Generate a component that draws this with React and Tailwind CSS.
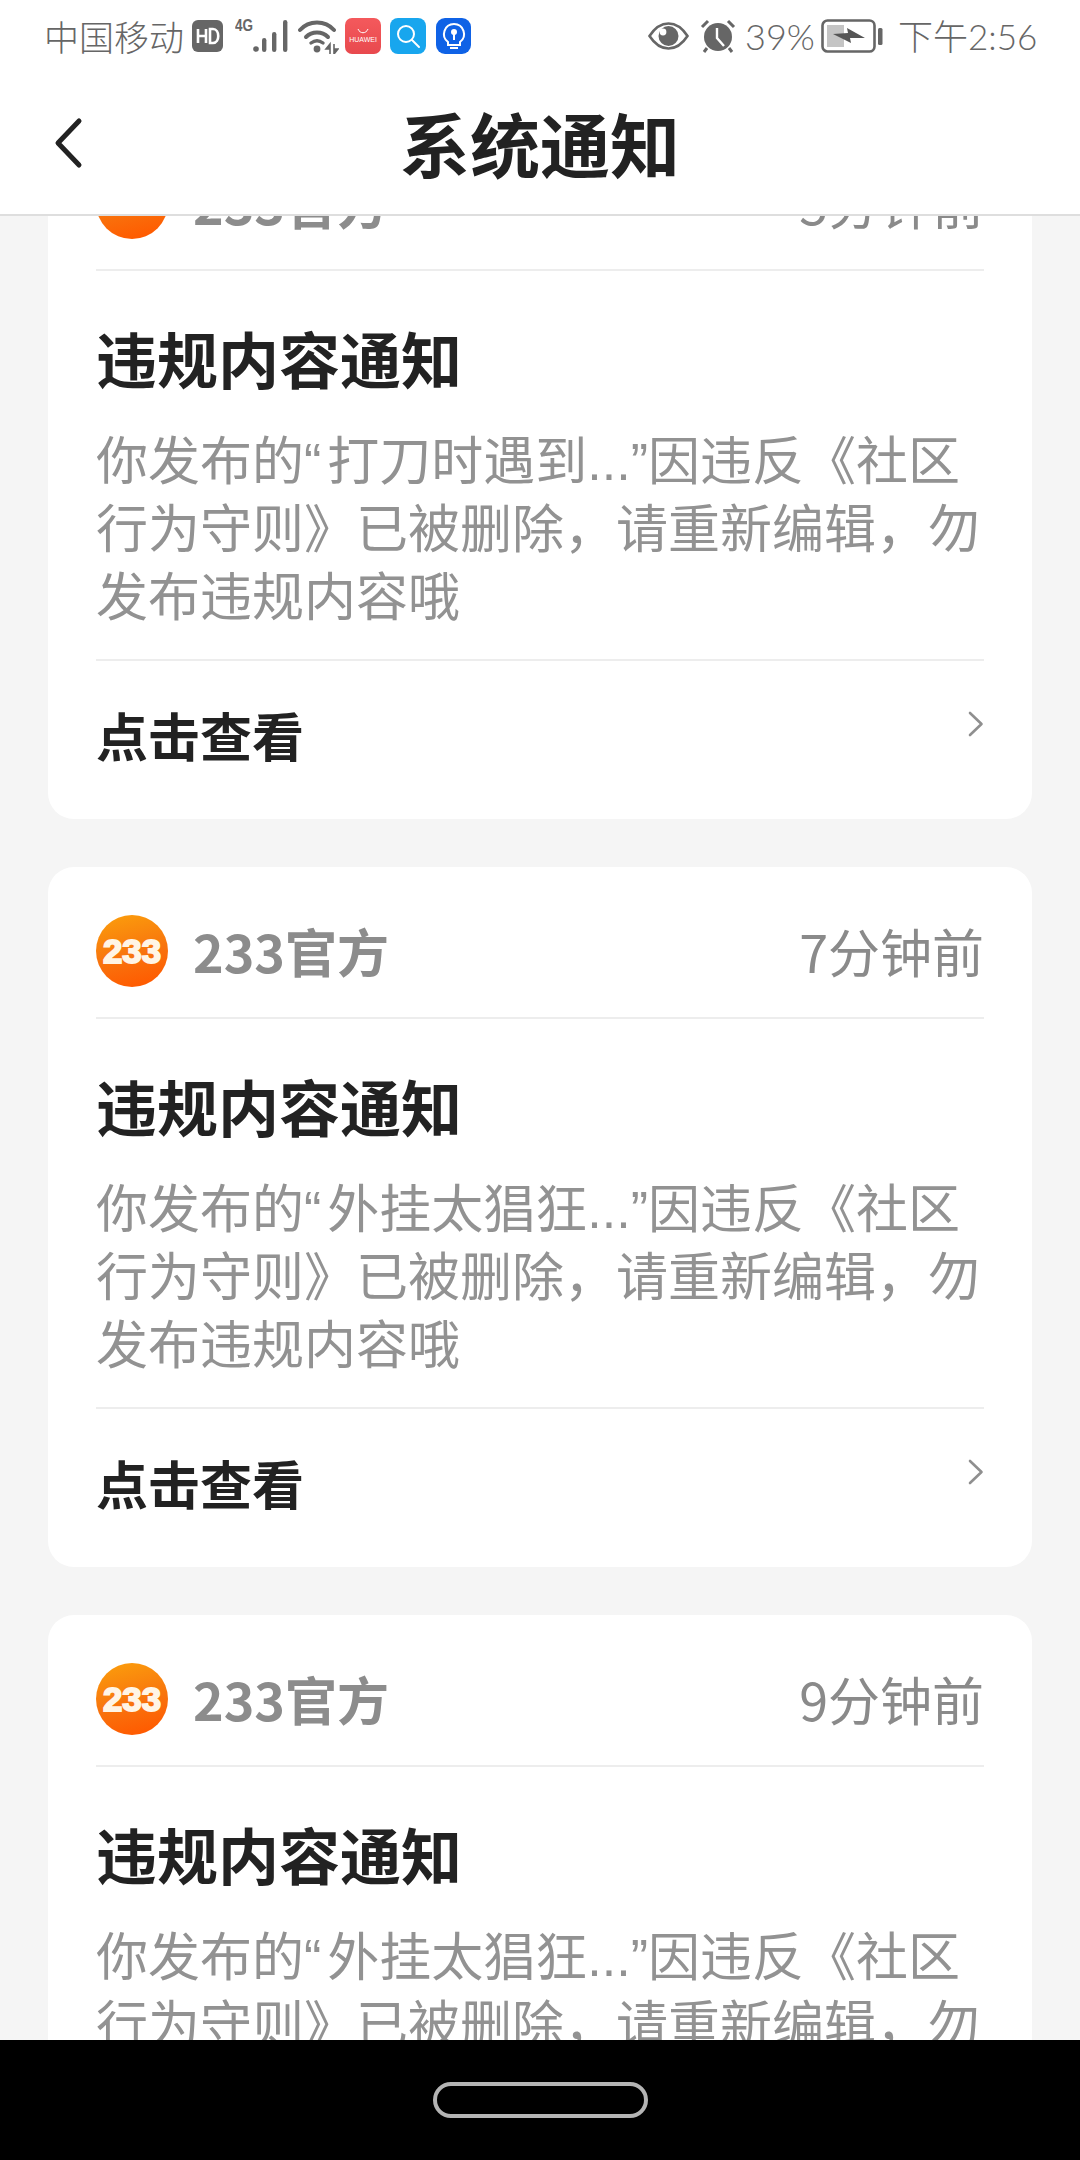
const cjk = "font-['Noto_Sans_CJK_SC','Noto_Sans',sans-serif]";

function Logo() {
  return (
    <svg width="72" height="72" viewBox="0 0 72 72" className="shrink-0">
      <defs>
        <linearGradient id="lg233" x1="0.35" y1="0" x2="0.6" y2="1">
          <stop offset="0" stopColor="#fb9a0c" />
          <stop offset="0.55" stopColor="#f8740e" />
          <stop offset="1" stopColor="#ff5a00" />
        </linearGradient>
      </defs>
      <circle cx="36" cy="36" r="36" fill="url(#lg233)" />
      <text x="36" y="48" textAnchor="middle" fontSize="33" fontWeight="900" fontFamily="'Liberation Sans',sans-serif" fill="#fff5e6" stroke="#fff5e6" strokeWidth="1.8" textLength="58" lengthAdjust="spacingAndGlyphs">233</text>
    </svg>
  );
}

function Card({ time, quoted }) {
  return (
    <div className="w-[984px] h-[700px] shrink-0 rounded-[26px] bg-white px-[48px] flex flex-col">
      <div className="h-[150px] pt-[18px] shrink-0 flex items-center justify-between">
        <div className="flex items-center gap-[25px]">
          <Logo />
          <span className="text-[52px] leading-[60px] font-bold text-[#8c8c8c]">233官方</span>
        </div>
        <span className="text-[52px] leading-[60px] text-[#8a8a8a]">{time}</span>
      </div>
      <div className="h-[2px] shrink-0 bg-[#ededed]" />
      <div className="mt-[45px] text-[61px] leading-[84px] font-bold text-[#222222] whitespace-nowrap">违规内容通知</div>
      <div className="mt-[28px] text-[52px] leading-[68px] text-[#929292] whitespace-nowrap font-['Liberation_Sans','Noto_Sans_CJK_SC',sans-serif]">
        <div>你发布的“<span className="ml-[6px]">{quoted}</span>...”因违反《社区</div>
        <div>行为守则》已被删除，请重新编辑，勿</div>
        <div>发布违规内容哦</div>
      </div>
      <div className="mt-[27px] h-[2px] shrink-0 bg-[#ededed]" />
      <div className="flex-1 flex items-center justify-between">
        <span className="text-[52px] font-bold leading-[68px] text-[#222222] mb-[10px]">点击查看</span>
        <svg width="16" height="26" viewBox="0 0 16 26" fill="none" className="mb-[32px]">
          <path d="M2 2l11.5 11L2 24" stroke="#8f8f8f" strokeWidth="2.6" strokeLinecap="round" strokeLinejoin="round" />
        </svg>
      </div>
    </div>
  );
}

function StatusBar() {
  return (
    <div className="h-[72px] pl-[44px] pr-[42px] flex items-center justify-between text-[#666666]">
      <div className="flex items-center">
        <span className="text-[35px] leading-[40px] font-light w-[148px] whitespace-nowrap">中国移动</span>
        <svg width="31" height="32" viewBox="0 0 31 32" className="shrink-0">
          <rect x="0" y="0" width="31" height="32" rx="6" fill="#666" />
          <path d="M6 9v14M14 9v14M6 16h8" stroke="#fff" strokeWidth="2.6" fill="none" />
          <path d="M18 9h3c7 0 7 14 0 14h-3z" stroke="#fff" strokeWidth="2.6" fill="none" />
        </svg>
        <svg width="54" height="36" viewBox="0 0 54 36" className="ml-[12px] shrink-0" fill="#666">
          <text x="0" y="13" fontSize="16" fontWeight="700" fontFamily="'Liberation Sans',sans-serif" textLength="18" lengthAdjust="spacingAndGlyphs">4G</text>
          <circle cx="21" cy="31" r="2.8" />
          <rect x="27" y="20" width="4.4" height="14" rx="2.2" />
          <rect x="37" y="14" width="4.4" height="20" rx="2.2" />
          <rect x="48" y="2" width="4.4" height="32" rx="2.2" />
        </svg>
        <svg width="41" height="36" viewBox="0 0 41 36" className="ml-[9px] shrink-0" fill="none" stroke="#666">
          <path d="M2 12C11 2 27 2 36 12" strokeWidth="4" strokeLinecap="round" />
          <path d="M8 19c6-6 16-6 22 0" strokeWidth="4" strokeLinecap="round" />
          <path d="M13 25c4-3 8-3 12 0" strokeWidth="3.4" strokeLinecap="round" />
          <circle cx="19" cy="31" r="3.4" fill="#666" stroke="none" />
          <path d="M32 26l-4 5h4zM32 26v10M36 26v10M36 36l4-5h-4z" strokeWidth="1.6" fill="#666" />
        </svg>
        <div className="ml-[6px] w-[36px] h-[36px] rounded-[7px] bg-gradient-to-b from-[#f4595c] to-[#e8494e] flex flex-col items-center justify-center shrink-0">
          <svg width="14" height="6" viewBox="0 0 14 6" fill="none" className="mb-[2px]"><path d="M2 1c2 5 8 5 10 0" stroke="#fff" strokeWidth="1" /></svg>
          <span className="text-[7px] leading-[8px] text-white font-['Liberation_Sans',sans-serif]">HUAWEI</span>
        </div>
        <div className="ml-[9px] w-[36px] h-[36px] rounded-[8px] bg-[#18a6ee] flex items-center justify-center shrink-0">
          <svg width="28" height="28" viewBox="0 0 28 28" fill="none" stroke="#fff">
            <circle cx="12" cy="12" r="8" strokeWidth="2" />
            <path d="M18 18l7 7" strokeWidth="2" strokeLinecap="round" />
          </svg>
        </div>
        <div className="ml-[10px] w-[35px] h-[36px] rounded-[9px] bg-[#0f62e6] flex items-center justify-center shrink-0">
          <svg width="26" height="28" viewBox="0 0 26 28" fill="none" stroke="#fff" strokeWidth="2">
            <path d="M13 2a10 10 0 0 0-6 18v3h12v-3a10 10 0 0 0-6-18z" />
            <path d="M9 26h8M13 10v8" />
            <circle cx="13" cy="10" r="2" fill="#fff" />
          </svg>
        </div>
      </div>
      <div className="flex items-center">
        <svg width="41" height="28" viewBox="0 0 41 28" className="shrink-0">
          <path d="M1.5 14C8 4 14 1.5 20.5 1.5S33 4 39.5 14C33 24 27 26.5 20.5 26.5S8 24 1.5 14z" fill="none" stroke="#666" strokeWidth="2.6" />
          <circle cx="20.5" cy="14" r="10" fill="#666" />
          <circle cx="15" cy="10" r="3.4" fill="#fff" />
        </svg>
        <svg width="36" height="34" viewBox="0 0 36 34" className="ml-[11px] shrink-0">
          <circle cx="18" cy="18" r="14" fill="#666" />
          <path d="M17 9v10l7 8" stroke="#fff" strokeWidth="2.4" fill="none" />
          <path d="M2 8l6-6M34 8l-6-6" stroke="#666" strokeWidth="3" />
          <path d="M7 29l-3 4M29 29l3 4" stroke="#666" strokeWidth="3" />
        </svg>
        <span className="ml-[9px] text-[36px] leading-[40px] font-light font-['Lato',sans-serif] w-[67px]">39%</span>
        <svg width="62" height="34" viewBox="0 0 62 34" className="ml-[9px] shrink-0">
          <rect x="1.5" y="1.5" width="52" height="31" rx="5" fill="none" stroke="#666" strokeWidth="2.6" />
          <rect x="6" y="6" width="17" height="22" fill="#c4c4c4" />
          <path d="M12 15L27 14L26 9L44 19L29 19L30 24Z" fill="#555" />
          <rect x="57" y="9" width="4.5" height="17" rx="1.5" fill="#666" />
        </svg>
        <span className="ml-[15px] text-[35px] leading-[40px] font-light w-[140px] whitespace-nowrap font-['Lato','Noto_Sans_CJK_SC',sans-serif]">下午2:56</span>
      </div>
    </div>
  );
}

export default function App() {
  const items = [
    { time: "5分钟前", quoted: "打刀时遇到" },
    { time: "7分钟前", quoted: "外挂太猖狂" },
    { time: "9分钟前", quoted: "外挂太猖狂" },
  ];
  return (
    <div className={`w-[1080px] h-[2160px] flex flex-col overflow-hidden bg-[#f5f5f5] ${cjk}`}>
      <div className="h-[214px] shrink-0 bg-white relative z-10">
        <StatusBar />
        <div className="h-[142px] flex items-center justify-center relative">
          <svg width="30" height="52" viewBox="0 0 30 52" fill="none" className="absolute left-[53px] top-[45px]">
            <path d="M26 4L5 26l21 22" stroke="#222222" strokeWidth="5" strokeLinecap="round" strokeLinejoin="round" />
          </svg>
          <span className="text-[70px] leading-[80px] font-bold text-[#222222]">系统通知</span>
        </div>
      </div>
      <div className="h-[2px] shrink-0 bg-[#dedede] relative z-10" />
      <div className="flex-1 min-h-0 overflow-hidden">
        <div className="-mt-[97px] flex flex-col items-center gap-[48px]">
          {items.map((it, i) => <Card key={i} {...it} />)}
        </div>
      </div>
      <div className="h-[120px] shrink-0 bg-black flex items-center justify-center">
        <div className="w-[215px] h-[36px] rounded-[18px] border-[4px] border-[#b4b4b4]" />
      </div>
    </div>
  );
}
